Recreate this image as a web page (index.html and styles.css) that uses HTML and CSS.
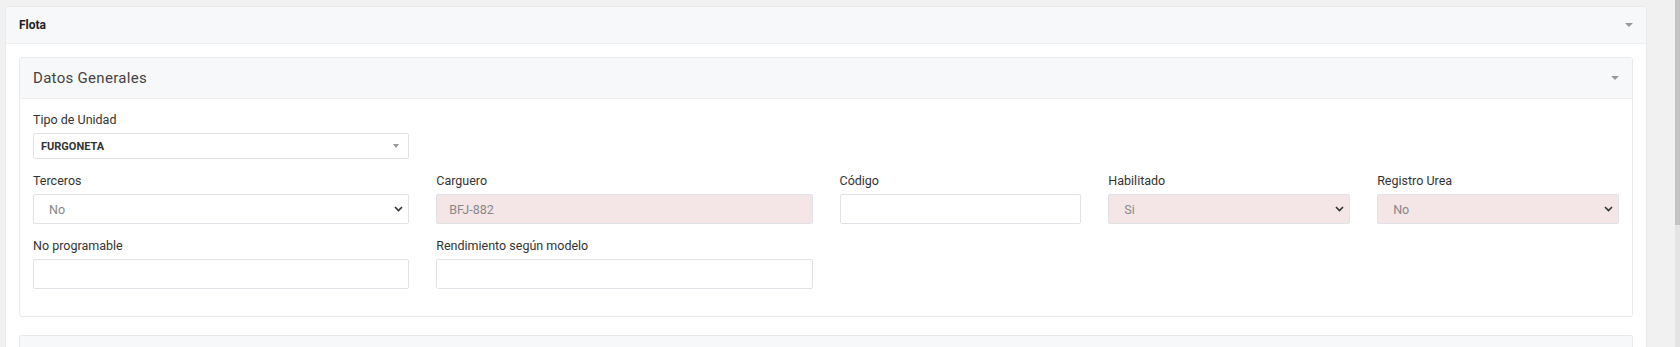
FILE: index.html
```html
<!DOCTYPE html>
<html lang="es">
<head>
    <meta charset="UTF-8" />
    <meta name="viewport" content="width=device-width, initial-scale=1" />
    <title>Flota</title>
    <link rel="stylesheet" href="styles.css">
</head>
<body>

<div class="page">
    <div class="main">
        <!-- tarjeta principal -->
        <div class="card">
            <div class="card-header">
                <span class="title-sm">Flota</span>
                <span class="caret"></span>
            </div>
            <div class="card-body">

                <div class="card inner">
                    <div class="card-header inner-header">
                        <span class="title-lg">Datos Generales</span>
                        <span class="caret"></span>
                    </div>
                    <div class="card-body form-body">

                        <div class="row">
                            <div class="col-3 group">
                                <label>Tipo de Unidad</label>
                                <div class="select2">
                                    <span>FURGONETA</span>
                                    <span class="tri"></span>
                                </div>
                            </div>
                        </div>

                        <div class="row">
                            <div class="col-3 group">
                                <label>Terceros</label>
                                <div class="control select">
                                    <span>No</span>
                                    <svg class="chev" width="9" height="6" viewBox="0 0 9 6"><path d="M1 1l3.5 3.5 3.5-3.5" fill="none" stroke="#333" stroke-width="1.6"/></svg>
                                </div>
                            </div>
                            <div class="col-3 group">
                                <label>Carguero</label>
                                <div class="control disabled">
                                    <span>BFJ-882</span>
                                </div>
                            </div>
                            <div class="col-2 group">
                                <label>Código</label>
                                <div class="control"></div>
                            </div>
                            <div class="col-2 group">
                                <label>Habilitado</label>
                                <div class="control select disabled">
                                    <span>Si</span>
                                    <svg class="chev" width="9" height="6" viewBox="0 0 9 6"><path d="M1 1l3.5 3.5 3.5-3.5" fill="none" stroke="#333" stroke-width="1.6"/></svg>
                                </div>
                            </div>
                            <div class="col-2 group">
                                <label>Registro Urea</label>
                                <div class="control select disabled">
                                    <span>No</span>
                                    <svg class="chev" width="9" height="6" viewBox="0 0 9 6"><path d="M1 1l3.5 3.5 3.5-3.5" fill="none" stroke="#333" stroke-width="1.6"/></svg>
                                </div>
                            </div>
                        </div>

                        <div class="row">
                            <div class="col-3 group">
                                <label>No programable</label>
                                <div class="control"></div>
                            </div>
                            <div class="col-3 group">
                                <label>Rendimiento según modelo</label>
                                <div class="control"></div>
                            </div>
                        </div>

                    </div>
                </div>

                <!-- siguiente tarjeta (cortada) -->
                <div class="card inner next">
                    <div class="card-header inner-header"></div>
                </div>

            </div>
        </div>
    </div>

    <div class="scrollbar">
        <div class="thumb"></div>
    </div>
</div>

</body>
</html>
```

FILE: styles.css
```css
body {
    margin: 0;
    background-color: #f1f1f1;
    font-family: Roboto, "Liberation Sans", sans-serif;
    color: #333;
}
.page {
    display: flex;
    height: 347px;
    overflow: hidden;
}
.main {
    flex: 1;
    padding: 6px 28px 0 5px;
}
.scrollbar {
    width: 5px;
    background: #e4e4e4;
}
.thumb {
    height: 225px;
    background: #c4c4c4;
}

/* tarjetas */
.card {
    background: #fff;
    border: 1px solid #e8eaec;
    border-radius: 3px;
}
.card-header {
    display: flex;
    align-items: center;
    justify-content: space-between;
    height: 36px;
    padding: 0 13px;
    background: #f7f8fa;
    border-bottom: 1px solid #eceef0;
}
.card-body {
    padding: 13px 13px 0 13px;
}
.title-sm {
    font-size: 12px;
    font-weight: bold;
    color: #222;
}
.title-lg {
    font-size: 15px;
    color: #444;
    letter-spacing: 0.3px;
}
.caret {
    width: 0;
    height: 0;
    border-left: 4px solid transparent;
    border-right: 4px solid transparent;
    border-top: 4px solid #999;
}
.inner-header {
    height: 40px;
}
.form-body {
    padding: 12px 13px 14px 13px;
}
.next {
    margin-top: 18px;
    border-bottom: none;
}

/* rejilla */
.row {
    display: flex;
    margin: 0 -13.5px;
}
.col-3 {
    width: 25%;
    padding: 0 13.5px;
    box-sizing: border-box;
}
.col-2 {
    width: 16.6667%;
    padding: 0 13.5px;
    box-sizing: border-box;
}
.group {
    margin-bottom: 13px;
}
label {
    display: block;
    font-size: 12.5px;
    line-height: 18px;
    color: #333;
    margin-bottom: 4px;
}

/* campos */
.control {
    height: 30px;
    box-sizing: border-box;
    border: 1px solid #dfe3e8;
    border-radius: 2px;
    background: #fff;
    display: flex;
    align-items: center;
    padding: 0 12px;
    font-size: 12.5px;
    color: #888;
}
.control.select {
    padding: 0 5px 0 15px;
    justify-content: space-between;
}
.control.disabled {
    background: #f4e6e6;
}
.chev {
    display: block;
}
.select2 {
    height: 26px;
    box-sizing: border-box;
    border: 1px solid #dfe3e8;
    border-radius: 2px;
    display: flex;
    align-items: center;
    justify-content: space-between;
    padding: 0 9px 0 7px;
    font-size: 11px;
    font-weight: bold;
    color: #333;
}
.tri {
    width: 0;
    height: 0;
    border-left: 3px solid transparent;
    border-right: 3px solid transparent;
    border-top: 4px solid #999;
}
```
